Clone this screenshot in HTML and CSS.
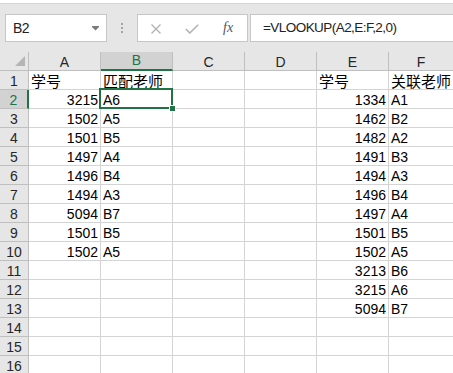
FILE: index.html
```html
<!DOCTYPE html>
<html lang="zh-CN">

<head>
    <meta charset="UTF-8">
    <meta name="viewport" content="width=device-width, initial-scale=1.0">
    <title>VLOOKUP</title>
    <link rel="stylesheet" href="styles.css">
</head>

<body>
    <div class="toolbar">
        <div class="name-box">
            <span class="name">B2</span>
            <svg class="drop" width="7" height="5" viewBox="0 0 7 5">
                <rect x="0" y="0" width="7" height="1" fill="#7a7a7a" />
                <polygon points="0,1 7,1 3.5,4.5" fill="#7a7a7a" />
            </svg>
        </div>
        <div class="dots"><i></i><i></i><i></i></div>
        <div class="fx-buttons">
            <svg class="ico-x" width="12" height="10" viewBox="0 0 12 10">
                <path d="M1.5 0.5 L10.5 9.5 M10.5 0.5 L1.5 9.5" stroke="#b3b3b3" stroke-width="1.4" fill="none" />
            </svg>
            <svg class="ico-ok" width="14" height="10" viewBox="0 0 14 10">
                <path d="M0.8 5 L4.8 9 L13.2 0.8" stroke="#b3b3b3" stroke-width="1.6" fill="none" />
            </svg>
            <span class="fx">fx</span>
        </div>
        <div class="formula">=VLOOKUP(A2,E:F,2,0)</div>
    </div>

    <div class="sheet" id="sheet"></div>

    <script>
        var sheet = document.getElementById("sheet");
        var cols = ["A", "B", "C", "D", "E", "F"];
        var data = {
            A: ["学号", 3215, 1502, 1501, 1497, 1496, 1494, 5094, 1501, 1502],
            B: ["匹配老师", "A6", "A5", "B5", "A4", "B4", "A3", "B7", "B5", "A5"],
            E: ["学号", 1334, 1462, 1482, 1491, 1494, 1496, 1497, 1501, 1502, 3213, 3215, 5094],
            F: ["关联老师", "A1", "B2", "A2", "B3", "A3", "B4", "A4", "B5", "A5", "B6", "A6", "B7"]
        };

        var add = function (cls, text) {
            var d = document.createElement("div");
            d.className = cls;
            if (text !== undefined) d.textContent = text;
            sheet.appendChild(d);
            return d;
        };

        add("corner");
        for (var i = 0; i < cols.length; i++) {
            add(cols[i] == "B" ? "ch sel" : "ch", cols[i]);
        }

        for (var r = 1; r <= 16; r++) {
            add(r == 2 ? "rh sel" : "rh", r);
            for (var j = 0; j < cols.length; j++) {
                var list = data[cols[j]];
                var val = list ? list[r - 1] : undefined;
                var cls = "c";
                if (typeof val == "number") cls += " num";
                else if (val && /[\u4e00-\u9fa5]/.test(val)) cls += " zh";
                if (r == 2 && cols[j] == "B") cls += " active";
                add(cls, val);
            }
        }
    </script>
</body>

</html>
```

FILE: styles.css
```css
body {
    margin: 0;
    width: 453px;
    height: 373px;
    overflow: hidden;
    background: #fff;
    font-family: "Liberation Sans", "Noto Sans CJK SC", sans-serif;
    color: #000;
}

/* 编辑栏 */
.toolbar {
    margin-top: 3px;
    border-top: 1px solid #d5d5d5;
    height: 38px;
    padding-top: 10px;
    background: #e6e6e6;
    display: flex;
    align-items: flex-start;
}

.name-box {
    box-sizing: border-box;
    width: 102px;
    height: 28px;
    margin-left: 5px;
    padding: 0 7px;
    background: #fff;
    border: 1px solid #c6c6c6;
    display: flex;
    align-items: center;
    justify-content: space-between;
}

.name {
    font-size: 14px;
    letter-spacing: -0.6px;
    color: #222;
}

.drop {
    margin-top: 1px;
}

.dots {
    margin: 9px 0 0 14px;
    width: 2px;
    display: flex;
    flex-direction: column;
    gap: 2px;
}

.dots i {
    display: block;
    width: 2px;
    height: 2px;
    background: #a3a3a3;
}

.fx-buttons {
    box-sizing: border-box;
    width: 111px;
    height: 28px;
    margin-left: 14px;
    background: #fff;
    border: 1px solid #c6c6c6;
    display: flex;
    align-items: center;
    padding-left: 12px;
}

.ico-x {
    margin-top: 1px;
}

.ico-ok {
    margin-left: 23px;
    margin-top: 1px;
}

.fx {
    margin-left: 24px;
    font-family: "Liberation Serif", serif;
    font-style: italic;
    font-size: 14px;
    color: #555;
}

.formula {
    box-sizing: border-box;
    flex: 1;
    height: 28px;
    margin-left: 2px;
    margin-right: -3px;
    padding-left: 12px;
    background: #fff;
    border: 1px solid #c6c6c6;
    font-size: 13.5px;
    letter-spacing: -0.55px;
    line-height: 26px;
    color: #222;
}

/* 表格 */
.sheet {
    display: grid;
    grid-template-columns: 29px repeat(5, 72px) 1fr;
    grid-auto-rows: 19px;
}

.sheet > div {
    box-sizing: border-box;
    white-space: nowrap;
    font-size: 14px;
    line-height: 15px;
    display: flex;
    align-items: flex-end;
}

.corner {
    position: relative;
    background: #e6e6e6;
    border-right: 1px solid #bfbfbf;
    border-bottom: 1px solid #bfbfbf;
}

.corner::after {
    content: "";
    position: absolute;
    left: 15px;
    top: 4px;
    width: 10px;
    height: 10px;
    background: #b5b5b5;
    clip-path: polygon(100% 0, 100% 100%, 0 100%);
}

.ch,
.rh {
    justify-content: center;
    background: #e6e6e6;
    border-right: 1px solid #bfbfbf;
    border-bottom: 1px solid #bfbfbf;
    color: #262626;
}

.ch.sel {
    background: #d2d2d2;
    color: #217346;
    border-bottom: 2px solid #217346;
    padding-bottom: 1px;
}

.rh.sel {
    background: #d2d2d2;
    color: #217346;
    border-right: 2px solid #217346;
}

.c {
    padding: 0 2px;
    border-right: 1px solid #d4d4d4;
    border-bottom: 1px solid #d4d4d4;
}

.num {
    justify-content: flex-end;
}

.sheet > .zh {
    font-size: 15px;
}

.active {
    position: relative;
}

.active::after {
    content: "";
    position: absolute;
    top: -2px;
    left: -2px;
    right: -1px;
    bottom: -1px;
    border: 2px solid #217346;
}

.active::before {
    content: "";
    position: absolute;
    right: -4px;
    bottom: -4px;
    width: 5px;
    height: 5px;
    background: #217346;
    border: 1px solid #fff;
    z-index: 1;
}
```
